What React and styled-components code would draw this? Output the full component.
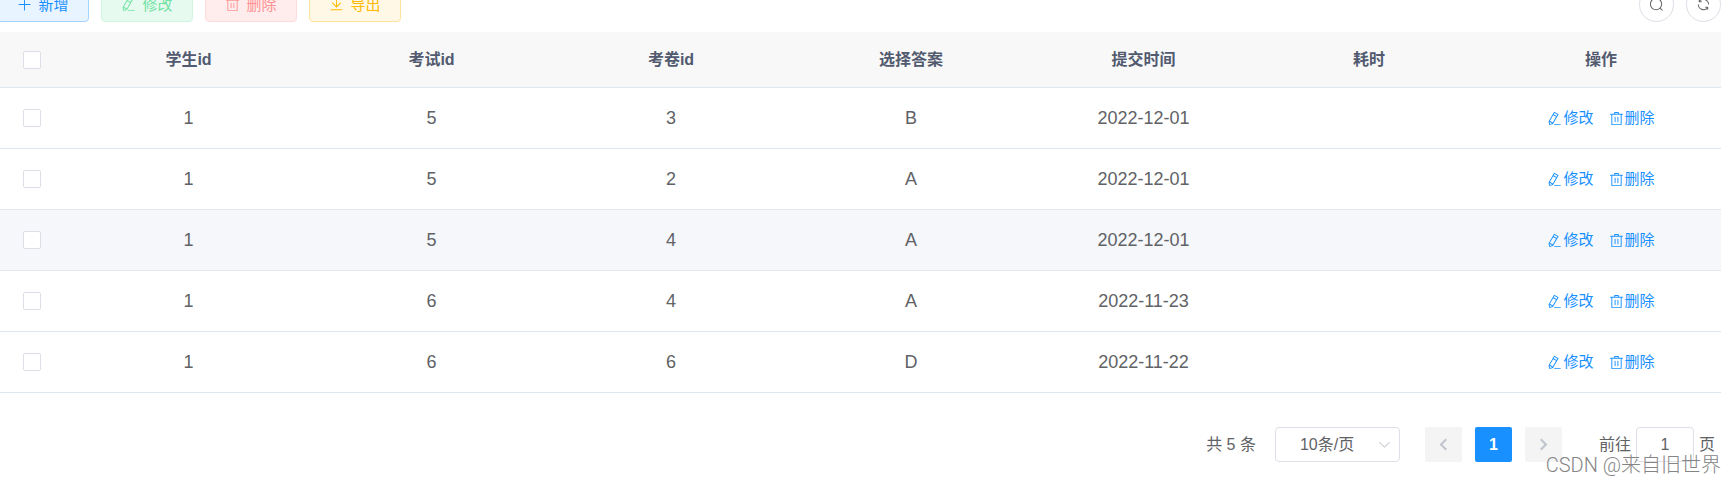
import React from 'react';
import styled, { createGlobalStyle } from 'styled-components';

const GlobalStyle = createGlobalStyle`
    * {
        box-sizing: border-box;
    }

    body {
        margin: 0;
        background: #fff;
        color: #606266;
    }

    body, button, input, select {
        font-family: "Liberation Sans", "Noto Sans CJK SC", sans-serif;
        line-height: 20px;
    }
`

const Page = styled.div`
    display: flow-root;
    position: relative;
    min-height: 100vh;
    padding-right: 14px;
    overflow: hidden;
`

const Toolbar = styled.div`
    display: flex;
    gap: 12px;
    margin: -13px 0 10px -3px;
`

const themes = {
    primary: { color: '#1890ff', background: '#e8f4ff', border: '#a3d3ff' },
    success: { color: '#71e2a3', background: '#e7faf0', border: '#d0f5e0' },
    danger: { color: '#ff9292', background: '#ffeded', border: '#ffdbdb' },
    warning: { color: '#ffba00', background: '#fff8e6', border: '#ffe399' }
}

const PlainButton = styled.button`
    display: flex;
    align-items: center;
    justify-content: center;
    gap: 6px;
    width: 92px;
    height: 35px;
    padding: 0;
    border: 1px solid ${({ $theme }) => themes[$theme].border};
    border-radius: 4px;
    background: ${({ $theme }) => themes[$theme].background};
    color: ${({ $theme }) => themes[$theme].color};
    font-size: 15px;
`

const RightTools = styled.div`
    display: flex;
    gap: 12px;
    margin-left: auto;
`

const CircleButton = styled.button`
    display: flex;
    align-items: center;
    justify-content: center;
    width: 35px;
    height: 35px;
    padding: 0;
    border: 1px solid #dcdfe6;
    border-radius: 50%;
    background: #fff;
    color: #606266;
`

const Svg = styled.svg`
    flex: none;
    width: ${({ $size }) => $size}px;
    height: ${({ $size }) => $size}px;
    fill: currentColor;
`

const Table = styled.table`
    width: 100%;
    table-layout: fixed;
    border-collapse: separate;
    border-spacing: 0;
    text-align: center;
`

const HeadCell = styled.th`
    height: 56px;
    padding: 0;
    border-bottom: 1px solid #dfe6ec;
    background: #f8f8f9;
    color: #515a6e;
    font-size: 16px;
    font-weight: 700;
`

const Row = styled.tr`
    background: ${({ $hover }) => ($hover ? '#f5f7fa' : '#fff')};
`

const Cell = styled.td`
    height: 61px;
    padding: 0;
    border-bottom: 1px solid #dfe6ec;
    font-size: 18px;
`

const Checkbox = styled.input`
    appearance: none;
    display: block;
    width: 18px;
    height: 18px;
    margin: 0 auto;
    border: 1px solid #dcdfe6;
    border-radius: 2px;
    background: #fff;
`

const Actions = styled.div`
    display: flex;
    justify-content: center;
    gap: 15px;
`

const TextButton = styled.button`
    display: flex;
    align-items: center;
    gap: 1px;
    padding: 0;
    border: 0;
    background: none;
    color: #1890ff;
    font-size: 15px;
`

const Pagination = styled.div`
    display: flex;
    align-items: center;
    justify-content: flex-end;
    margin-top: 34px;
    padding-right: 6px;
    font-size: 16px;
`

const SizeBox = styled.div`
    display: flex;
    align-items: center;
    position: relative;
    margin: 0 25px 0 19px;

    svg {
        position: absolute;
        right: 8px;
        color: #c0c4cc;
        pointer-events: none;
    }
`

const SizeSelect = styled.select`
    appearance: none;
    width: 125px;
    height: 35px;
    padding: 0 24px;
    border: 1px solid #dcdfe6;
    border-radius: 4px;
    background: #fff;
    color: #606266;
    font-size: 16px;
`

const Pager = styled.div`
    display: flex;
    gap: 13px;
    margin-right: 37px;
`

const PageButton = styled.button`
    display: flex;
    align-items: center;
    justify-content: center;
    width: 37px;
    height: 35px;
    padding: 0;
    border: 0;
    border-radius: 2px;
    background: ${({ $active }) => ($active ? '#1890ff' : '#f4f4f5')};
    color: ${({ $active }) => ($active ? '#fff' : '#c0c4cc')};
    font-size: 16px;
    font-weight: 700;
`

const Jump = styled.label`
    display: flex;
    align-items: center;
    gap: 5px;
`

const JumpInput = styled.input`
    width: 58px;
    height: 35px;
    padding: 0;
    border: 1px solid #dcdfe6;
    border-radius: 4px;
    color: #606266;
    font-size: 16px;
    text-align: center;
`

const Watermark = styled.span`
    position: absolute;
    right: 14px;
    bottom: 7px;
    color: #858585;
    font-family: "Roboto", "Noto Sans CJK SC", sans-serif;
    font-size: 20px;
    font-weight: 300;
    text-shadow: 0 0 1px #fff;
    white-space: nowrap;
    pointer-events: none;
`

const paths = {
    plus: 'M480 480V128a32 32 0 0 1 64 0v352h352a32 32 0 1 1 0 64H544v352a32 32 0 1 1-64 0V544H128a32 32 0 0 1 0-64h352z',
    edit: 'm199.04 672.64 193.984 112 224-387.968-193.92-112-224 388.032zm-23.872 60.16 32.896 148.288 144.896-45.696L175.168 732.8zM455.04 229.248l193.92 112 56.704-98.112-193.984-112-56.64 98.112zM104.32 708.8l384-665.024 304.768 175.936L409.152 884.8h.064l-248.448 78.336L104.32 708.8zm384 254.272v-64h448v64h-448z',
    remove: 'M160 256H96a32 32 0 0 1 0-64h256V95.936a32 32 0 0 1 32-32h256a32 32 0 0 1 32 32V192h256a32 32 0 1 1 0 64h-64v672a32 32 0 0 1-32 32H192a32 32 0 0 1-32-32V256zm448-64v-64H416v64h192zM224 896h576V256H224v640zm192-128a32 32 0 0 1-32-32V416a32 32 0 0 1 64 0v320a32 32 0 0 1-32 32zm192 0a32 32 0 0 1-32-32V416a32 32 0 0 1 64 0v320a32 32 0 0 1-32 32z',
    download: 'M128 832h768v64H128v-64zm416-229.696 236.288-236.352 45.248 45.248L512 728 198.464 411.2l45.248-45.248L480 602.304V128h64v474.304z',
    search: 'm795.904 750.72 124.992 124.928a32 32 0 0 1-45.248 45.248L750.656 795.904a416 416 0 1 1 45.248-45.248zM480 832a352 352 0 1 0 0-704 352 352 0 0 0 0 704z',
    refresh: 'M771.776 794.88A384 384 0 0 1 128 512h64a320 320 0 0 0 555.712 216.448H654.72a32 32 0 1 1 0-64h149.056a32 32 0 0 1 32 32v148.928a32 32 0 1 1-64 0v-50.56zM276.288 295.616h92.992a32 32 0 0 1 0 64H220.16a32 32 0 0 1-32-32V178.56a32 32 0 0 1 64 0v50.56A384 384 0 0 1 896.128 512h-64a320 320 0 0 0-555.776-216.384z',
    down: 'M831.872 340.864 512 652.672 192.128 340.864a30.592 30.592 0 0 0-42.752 0 29.12 29.12 0 0 0 0 41.6L489.664 714.24a32 32 0 0 0 44.672 0l340.288-331.712a29.12 29.12 0 0 0 0-41.728 30.592 30.592 0 0 0-42.752 0z',
    left: 'M650 100 245 512l405 412 100-100-306-312 306-312z',
    right: 'M374 100 779 512 374 924 274 824l306-312-306-312z'
}

const Icon = ({ name, size = 15 }) => (
    <Svg $size={size} viewBox="0 0 1024 1024" aria-hidden="true">
        <path d={paths[name]} />
    </Svg>
);

const tools = [
    { theme: 'primary', icon: 'plus', label: '新增' },
    { theme: 'success', icon: 'edit', label: '修改' },
    { theme: 'danger', icon: 'remove', label: '删除' },
    { theme: 'warning', icon: 'download', label: '导出' }
]

const columns = [
    { title: '学生id', width: 249 },
    { title: '考试id', width: 237 },
    { title: '考卷id', width: 242 },
    { title: '选择答案', width: 238 },
    { title: '提交时间', width: 227 },
    { title: '耗时', width: 224 },
    { title: '操作', width: 240 }
]

const records = [
    { student: 1, exam: 5, paper: 3, answer: 'B', date: '2022-12-01' },
    { student: 1, exam: 5, paper: 2, answer: 'A', date: '2022-12-01' },
    { student: 1, exam: 5, paper: 4, answer: 'A', date: '2022-12-01', hover: true },
    { student: 1, exam: 6, paper: 4, answer: 'A', date: '2022-11-23' },
    { student: 1, exam: 6, paper: 6, answer: 'D', date: '2022-11-22' }
]

const RecordRow = ({ record }) => (
    <Row $hover={record.hover}>
        <Cell><Checkbox type="checkbox" aria-label="选择" /></Cell>
        <Cell>{record.student}</Cell>
        <Cell>{record.exam}</Cell>
        <Cell>{record.paper}</Cell>
        <Cell>{record.answer}</Cell>
        <Cell>{record.date}</Cell>
        <Cell />
        <Cell>
            <Actions>
                <TextButton><Icon name="edit" />修改</TextButton>
                <TextButton><Icon name="remove" />删除</TextButton>
            </Actions>
        </Cell>
    </Row>
);

const App = () => {
    return (
        <Page>
            <GlobalStyle />
            <Toolbar>
                {tools.map(({ theme, icon, label }) => (
                    <PlainButton key={icon} $theme={theme}>
                        <Icon name={icon} />
                        {label}
                    </PlainButton>
                ))}
                <RightTools>
                    <CircleButton aria-label="搜索"><Icon name="search" /></CircleButton>
                    <CircleButton aria-label="刷新"><Icon name="refresh" /></CircleButton>
                </RightTools>
            </Toolbar>
            <Table>
                <colgroup>
                    <col width="64" />
                    {columns.map(({ title, width }) => <col key={title} width={width} />)}
                </colgroup>
                <thead>
                    <tr>
                        <HeadCell><Checkbox type="checkbox" aria-label="全选" /></HeadCell>
                        {columns.map(({ title }) => <HeadCell key={title}>{title}</HeadCell>)}
                    </tr>
                </thead>
                <tbody>
                    {records.map((record, index) => <RecordRow key={index} record={record} />)}
                </tbody>
            </Table>
            <Pagination>
                <span>共 5 条</span>
                <SizeBox>
                    <SizeSelect aria-label="每页条数">
                        <option>10条/页</option>
                    </SizeSelect>
                    <Icon name="down" />
                </SizeBox>
                <Pager>
                    <PageButton aria-label="上一页" disabled><Icon name="left" /></PageButton>
                    <PageButton $active>1</PageButton>
                    <PageButton aria-label="下一页" disabled><Icon name="right" /></PageButton>
                </Pager>
                <Jump>
                    前往
                    <JumpInput type="text" defaultValue="1" />
                    页
                </Jump>
            </Pagination>
            <Watermark>CSDN @来自旧世界</Watermark>
        </Page>
    );
};

export default App;
